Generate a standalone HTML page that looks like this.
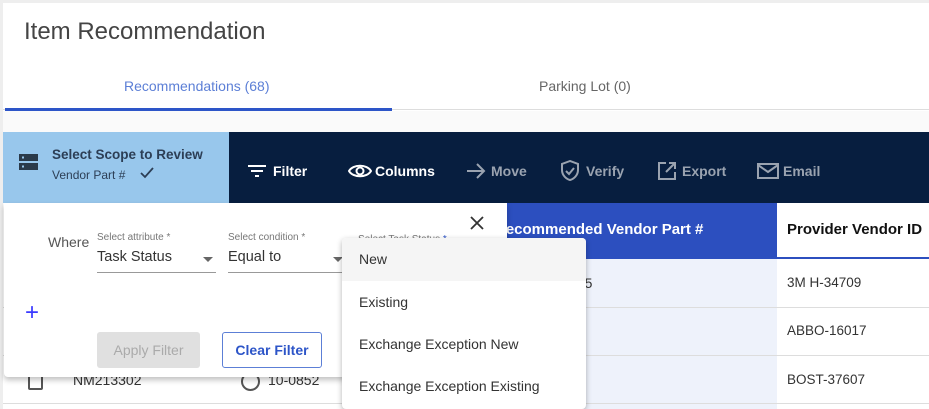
<!DOCTYPE html><html><head><style>
*{box-sizing:border-box;margin:0;padding:0}
body{width:929px;height:409px;overflow:hidden;background:#eeeeee;font-family:"Liberation Sans",Arial,sans-serif;position:relative}
.a{position:absolute}
.card{left:3px;top:3px;width:926px;height:406px;background:#fff}
.t{font-size:14px;color:#333}
.tb{font-size:14px;font-weight:bold}
</style></head><body>
<div class="a card"></div>
<div class="a" style="left:24px;top:18px;font-size:24px;color:#444">Item Recommendation</div>
<div class="a" style="left:124px;top:78px;font-size:14px;color:#5c7fd6">Recommendations (68)</div>
<div class="a" style="left:539px;top:78px;font-size:14px;color:#666">Parking Lot (0)</div>
<div class="a" style="left:3px;top:109px;width:926px;height:1px;background:#ddd"></div>
<div class="a" style="left:5px;top:108px;width:387px;height:3px;background:#2d55c8"></div>
<div class="a" style="left:3px;top:111px;width:926px;height:21px;background:#fafafa"></div>
<div class="a" style="left:3px;top:132px;width:226px;height:71px;background:#98c7ec"></div>
<div class="a" style="left:229px;top:132px;width:700px;height:71px;background:#071e3f"></div>
<svg class="a" style="left:19px;top:154px" width="20" height="18"><rect x="0" y="0" width="19" height="7" fill="#2a3a4a"/><rect x="0" y="9" width="19" height="7" fill="#2a3a4a"/><rect x="3" y="2.5" width="2" height="2" fill="#98c7ec"/><rect x="3" y="11.5" width="2" height="2" fill="#98c7ec"/></svg>
<div class="a" style="left:52px;top:147px;font-size:13.5px;font-weight:bold;color:#2c3e55">Select Scope to Review</div>
<div class="a" style="left:52px;top:168px;font-size:12px;color:#2c3e55">Vendor Part #</div>
<svg class="a" style="left:139px;top:166px" width="16" height="14"><path d="M2 7l4 4 8-9" stroke="#2c3e55" stroke-width="1.8" fill="none"/></svg>
<svg class="a" style="left:247px;top:163px" width="20" height="16"><path d="M1 3h18M4 8h12M8 13h4" stroke="#fff" stroke-width="2"/></svg>
<div class="a tb" style="left:273px;top:163px;color:#fff">Filter</div>
<svg class="a" style="left:348px;top:162px" width="24" height="18"><path d="M1 9C5 2 19 2 23 9C19 16 5 16 1 9Z" stroke="#fff" stroke-width="2" fill="none"/><circle cx="12" cy="9" r="3.5" stroke="#fff" stroke-width="2" fill="none"/></svg>
<div class="a tb" style="left:375px;top:163px;color:#fff">Columns</div>
<svg class="a" style="left:466px;top:162px" width="20" height="18"><path d="M1 9h17M11 2l7 7-7 7" stroke="#9aa3b0" stroke-width="2" fill="none"/></svg>
<div class="a tb" style="left:491px;top:163px;color:#9aa3b0">Move</div>
<svg class="a" style="left:560px;top:160px" width="20" height="22"><path d="M10 1L2 4v6c0 5 4 9 8 10 4-1 8-5 8-10V4z" stroke="#9aa3b0" stroke-width="2" fill="none"/><path d="M6 11l3 3 5-6" stroke="#9aa3b0" stroke-width="2" fill="none"/></svg>
<div class="a tb" style="left:586px;top:163px;color:#9aa3b0">Verify</div>
<svg class="a" style="left:657px;top:161px" width="20" height="20"><path d="M9 2H2v16h16v-7M12 2h6v6M18 2l-9 9" stroke="#9aa3b0" stroke-width="2" fill="none"/></svg>
<div class="a tb" style="left:682px;top:163px;color:#9aa3b0">Export</div>
<svg class="a" style="left:757px;top:163px" width="22" height="16"><rect x="1" y="1" width="20" height="14" stroke="#9aa3b0" stroke-width="2" fill="none"/><path d="M1 2l10 7 10-7" stroke="#9aa3b0" stroke-width="2" fill="none"/></svg>
<div class="a tb" style="left:783px;top:163px;color:#9aa3b0">Email</div>
<div class="a" style="left:507px;top:203px;width:270px;height:55px;background:#2c4fbf"></div>
<div class="a" style="left:495px;top:221px;font-size:15px;font-weight:bold;color:#fff">Recommended Vendor Part #</div>
<div class="a" style="left:787px;top:221px;font-size:15px;font-weight:bold;color:#111">Provider Vendor ID</div>
<div class="a" style="left:507px;top:257px;width:422px;height:2px;background:#2c4fbf"></div>
<div class="a" style="left:507px;top:259px;width:270px;height:150px;background:#eef2fb"></div>
<div class="a" style="left:3px;top:307px;width:926px;height:1px;background:#ddd"></div>
<div class="a" style="left:3px;top:355px;width:926px;height:1px;background:#ddd"></div>
<div class="a" style="left:3px;top:403px;width:926px;height:1px;background:#ddd"></div>
<div class="a t" style="left:580px;top:275px">-5</div>
<div class="a t" style="left:787px;top:275px;font-size:13.5px">3M H-34709</div>
<div class="a t" style="left:787px;top:323px;font-size:13.5px">ABBO-16017</div>
<div class="a t" style="left:787px;top:372px;font-size:13.5px">BOST-37607</div>
<div class="a" style="left:28px;top:374px;width:15px;height:16px;border:2px solid #555;border-radius:2px"></div>
<div class="a t" style="left:73px;top:372px">NM213302</div>
<div class="a" style="left:241px;top:372px;width:19px;height:19px;border:2px solid #555;border-radius:50%"></div>
<div class="a t" style="left:268px;top:372px">10-0852</div>
<div class="a" style="left:4px;top:203px;width:503px;height:174px;background:#fff;box-shadow:0 3px 6px rgba(0,0,0,.25);border-radius:0 0 4px 4px"></div>
<svg class="a" style="left:469px;top:215px" width="16" height="16"><path d="M2 2l12 12M14 2L2 14" stroke="#333" stroke-width="1.8"/></svg>
<div class="a" style="left:48px;top:234px;font-size:14px;color:#555">Where</div>
<div class="a" style="left:97px;top:232px;font-size:10px;color:#777">Select attribute *</div>
<div class="a" style="left:97px;top:249px;font-size:14.5px;color:#333">Task Status</div>
<div class="a" style="left:203px;top:257px;border:5px solid transparent;border-top-color:#666"></div>
<div class="a" style="left:97px;top:272px;width:119px;height:1px;background:#999"></div>
<div class="a" style="left:228px;top:232px;font-size:10px;color:#777">Select condition *</div>
<div class="a" style="left:228px;top:249px;font-size:14.5px;color:#333">Equal to</div>
<div class="a" style="left:333px;top:257px;border:5px solid transparent;border-top-color:#666"></div>
<div class="a" style="left:228px;top:272px;width:120px;height:1px;background:#999"></div>
<div class="a" style="left:358px;top:234px;font-size:10px;color:#777">Select Task Status <span style="color:#2d55c8">*</span></div>
<div class="a" style="left:25px;top:301px;font-size:24px;color:#3a3aff;line-height:24px">+</div>
<div class="a" style="left:97px;top:332px;width:103px;height:36px;background:#e0e0e0;border-radius:3px;color:#aaa;font-size:14px;text-align:center;line-height:36px">Apply Filter</div>
<div class="a" style="left:222px;top:332px;width:100px;height:36px;border:1px solid #5c7fd6;border-radius:3px;color:#2d55c8;font-size:14px;font-weight:bold;text-align:center;line-height:34px">Clear Filter</div>
<div class="a" style="left:342px;top:238px;width:244px;height:171px;background:#fff;box-shadow:0 2px 6px rgba(0,0,0,.3);border-radius:4px;overflow:hidden">
<div style="height:43px;background:#f5f5f5"></div></div>
<div class="a t" style="left:359px;top:251px">New</div>
<div class="a t" style="left:359px;top:294px">Existing</div>
<div class="a t" style="left:359px;top:336px">Exchange Exception New</div>
<div class="a t" style="left:359px;top:378px">Exchange Exception Existing</div>
</body></html>
